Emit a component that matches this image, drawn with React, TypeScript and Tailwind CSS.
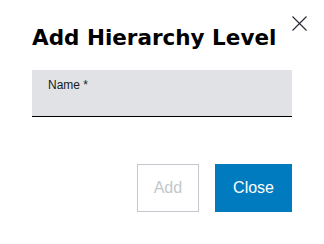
import React from "react";

export default function App() {
  return (
    <div className="relative w-[324px] h-[244px] bg-white px-8 pt-6 font-['Liberation_Sans',Arial,sans-serif]">
      <button
        aria-label="Close"
        className="absolute left-[291px] top-[15px] w-[17px] h-[17px] flex items-center justify-center"
      >
        <svg width="17" height="17" viewBox="0 0 17 17" fill="none">
          <path d="M1.5 1.5L15.5 15.5M15.5 1.5L1.5 15.5" stroke="#2a2433" strokeWidth="1.1" />
        </svg>
      </button>
      <h2 className="text-[21.5px] leading-[28px] font-bold text-black font-['DejaVu_Sans',sans-serif]">
        Add Hierarchy Level
      </h2>
      <div className="mt-[18px] h-[47px] bg-[#e0e2e5] border-b border-[#000] pl-4 pt-[7px]">
        <div className="text-[12px] leading-[16px] text-[#1a1a1a]">Name *</div>
      </div>
      <div className="mt-[47px] flex justify-end gap-4">
        <button className="h-12 px-4 border border-[#c1c7cc] bg-white text-[16px] text-[#c1c7cc]">
          Add
        </button>
        <button className="h-12 px-[17px] border border-[#007bc0] bg-[#007bc0] text-[16px] text-white">
          Close
        </button>
      </div>
    </div>
  );
}
